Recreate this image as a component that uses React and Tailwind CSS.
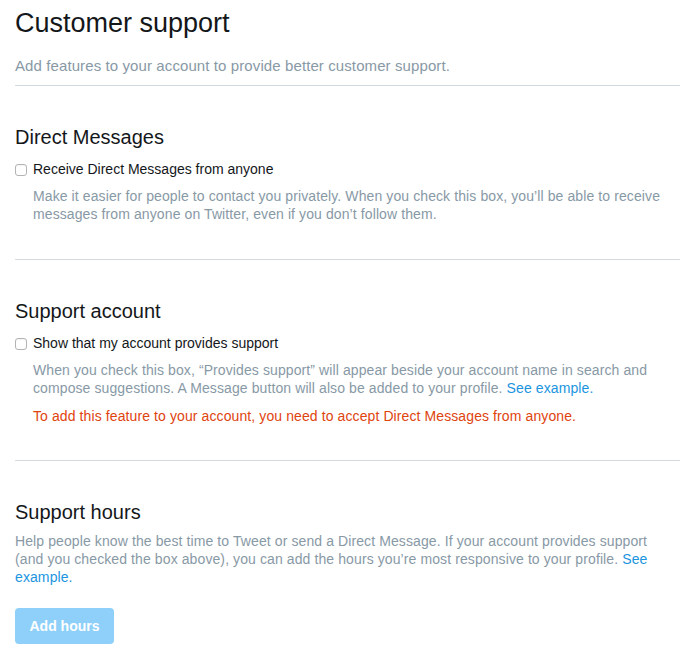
import React from 'react'

function Checkbox() {
  return (
    <span className="mt-[4px] mr-[6px] inline-block h-[12px] w-[12px] shrink-0 rounded-[3px] border border-[#b4b4b4] bg-white shadow-[inset_0_1px_1px_rgba(0,0,0,0.05)]" />
  )
}

function Divider() {
  return <div className="h-px w-[665px] bg-[#d4dbe0]" />
}

export default function App() {
  return (
    <div
      className="min-h-screen bg-white pl-[15px] pt-[7px] text-[#14171a]"
      style={{ fontFamily: '"Liberation Sans", Arial, sans-serif' }}
    >
      {/* Header */}
      <h1 className="text-[27px] leading-[32px]">Customer support</h1>
      <p className="mt-[18px] text-[15px] leading-[18px] tracking-[0.1px] text-[#8899a6]">
        Add features to your account to provide better customer support.
      </p>
      <div className="mt-[10px]">
        <Divider />
      </div>

      {/* Direct Messages */}
      <section className="pt-[39px]">
        <h2 className="text-[20px] leading-[24px]">Direct Messages</h2>
        <label className="mt-[11px] flex items-start text-[14px] leading-[18px]">
          <Checkbox />
          <span>Receive Direct Messages from anyone</span>
        </label>
        <p className="mt-[9px] w-[646px] pl-[18px] text-[14px] leading-[18px] tracking-[0.1px] text-[#8899a6]">
          Make it easier for people to contact you privately. When you check this box, you’ll be able to receive
          messages from anyone on Twitter, even if you don’t follow them.
        </p>
      </section>
      <div className="mt-[36px]">
        <Divider />
      </div>

      {/* Support account */}
      <section className="pt-[39px]">
        <h2 className="text-[20px] leading-[24px]">Support account</h2>
        <label className="mt-[11px] flex items-start text-[14px] leading-[18px]">
          <Checkbox />
          <span>Show that my account provides support</span>
        </label>
        <p className="mt-[9px] w-[646px] pl-[18px] text-[14px] leading-[18px] tracking-[0.1px] text-[#8899a6]">
          When you check this box, “Provides support” will appear beside your account name in search and compose
          suggestions. A Message button will also be added to your profile.{' '}
          <a className="text-[#1b95e0]">See example.</a>
        </p>
        <p className="mt-[10px] pl-[18px] text-[14px] leading-[18px] tracking-[0.1px] text-[#e0440e]">
          To add this feature to your account, you need to accept Direct Messages from anyone.
        </p>
      </section>
      <div className="mt-[35px]">
        <Divider />
      </div>

      {/* Support hours */}
      <section className="pt-[39px]">
        <h2 className="text-[20px] leading-[24px]">Support hours</h2>
        <p className="mt-[8px] w-[646px] text-[14px] leading-[18px] tracking-[0.1px] text-[#8899a6]">
          Help people know the best time to Tweet or send a Direct Message. If your account provides support (and
          you checked the box above), you can add the hours you’re most responsive to your profile.{' '}
          <a className="text-[#1b95e0]">See example.</a>
        </p>
        <button className="mt-[22px] h-[36px] w-[99px] rounded-[4px] bg-[#8ed0f9] text-[14px] font-bold text-white">
          Add hours
        </button>
      </section>
    </div>
  )
}
